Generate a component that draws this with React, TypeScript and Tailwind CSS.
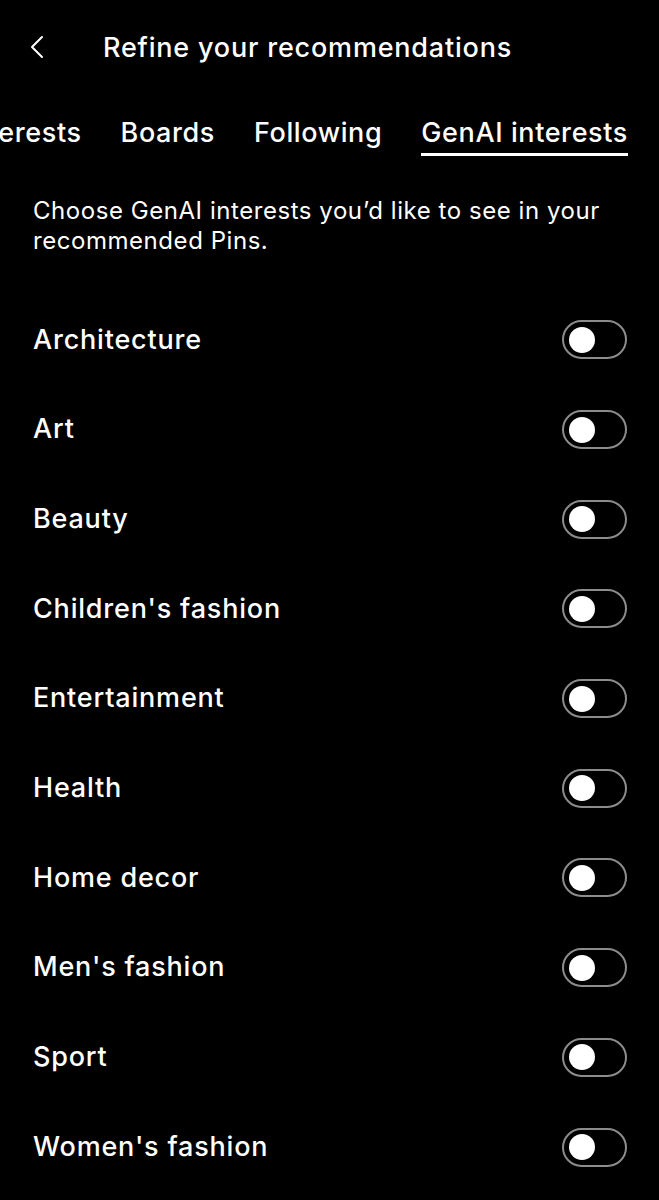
import { useState } from "react"

const topics = [
  "Architecture",
  "Art",
  "Beauty",
  "Children's fashion",
  "Entertainment",
  "Health",
  "Home decor",
  "Men's fashion",
  "Sport",
  "Women's fashion",
]

function Toggle({ on, onClick }: { on: boolean; onClick: () => void }) {
  return (
    <button
      onClick={onClick}
      className={`flex h-[39px] w-[65px] items-center rounded-full border-2 px-[5px] ${
        on ? "border-white bg-white justify-end" : "border-[#8c8c8c] bg-black justify-start"
      }`}
    >
      <span className={`block h-[26px] w-[26px] rounded-full ${on ? "bg-black" : "bg-white"}`} />
    </button>
  )
}

export default function App() {
  const [enabled, setEnabled] = useState<Record<string, boolean>>({})

  return (
    <div
      className="min-h-[1200px] w-full bg-black text-white antialiased"
      style={{ fontFamily: "Inter, 'Liberation Sans', sans-serif" }}
    >
      {/* header */}
      <div className="flex h-[96px] items-center pl-[28px]">
        <svg width="18" height="26" viewBox="0 0 18 26" fill="none" className="mb-[2px]">
          <path d="M14 3 L4 13 L14 23" stroke="white" strokeWidth="2" strokeLinecap="round" strokeLinejoin="round" />
        </svg>
        <h1 className="ml-[57px] text-[27px] font-medium tracking-[0.8px]">Refine your recommendations</h1>
      </div>

      {/* tabs, scrolled to the last one */}
      <div className="mt-[21px] overflow-hidden">
        <div className="-ml-[36px] flex gap-[39px] whitespace-nowrap text-[27px] leading-[32px] font-medium tracking-[0.6px]">
          <span className="pb-[7px]">Interests</span>
          <span className="pb-[7px]">Boards</span>
          <span className="pb-[7px]">Following</span>
          <span className="border-b-[3px] border-white pb-[4px]">GenAI interests</span>
        </div>
      </div>

      {/* description */}
      <p className="mt-[40px] px-[33px] text-[24px] leading-[30px] tracking-[0.55px]">
        Choose GenAI interests you’d like to see in your recommended Pins.
      </p>

      {/* list */}
      <div className="mt-[39px]">
        {topics.map((t) => (
          <div key={t} className="flex h-[89.7px] items-center justify-between pl-[33px] pr-[32px]">
            <span className="text-[27px] font-medium tracking-[0.8px]">{t}</span>
            <Toggle on={!!enabled[t]} onClick={() => setEnabled((s) => ({ ...s, [t]: !s[t] }))} />
          </div>
        ))}
      </div>
    </div>
  )
}
